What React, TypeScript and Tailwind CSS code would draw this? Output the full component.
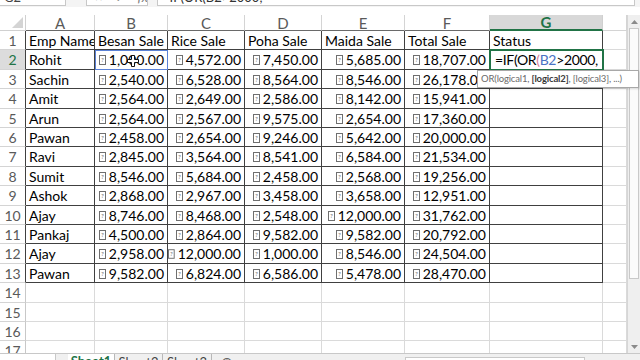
import React from 'react';

const data: string[][] = [
  ['Emp Name', 'Besan Sale', 'Rice Sale', 'Poha Sale', 'Maida Sale', 'Total Sale', 'Status'],
  ['Rohit', '1,000.00', '4,572.00', '7,450.00', '5,685.00', '18,707.00', ''],
  ['Sachin', '2,540.00', '6,528.00', '8,564.00', '8,546.00', '26,178.00', ''],
  ['Amit', '2,564.00', '2,649.00', '2,586.00', '8,142.00', '15,941.00', ''],
  ['Arun', '2,564.00', '2,567.00', '9,575.00', '2,654.00', '17,360.00', ''],
  ['Pawan', '2,458.00', '2,654.00', '9,246.00', '5,642.00', '20,000.00', ''],
  ['Ravi', '2,845.00', '3,564.00', '8,541.00', '6,584.00', '21,534.00', ''],
  ['Sumit', '8,546.00', '5,684.00', '2,458.00', '2,568.00', '19,256.00', ''],
  ['Ashok', '2,868.00', '2,967.00', '3,458.00', '3,658.00', '12,951.00', ''],
  ['Ajay', '8,746.00', '8,468.00', '2,548.00', '12,000.00', '31,762.00', ''],
  ['Pankaj', '4,500.00', '2,864.00', '9,582.00', '9,582.00', '20,792.00', ''],
  ['Ajay', '2,958.00', '12,000.00', '1,000.00', '8,546.00', '24,504.00', ''],
  ['Pawan', '9,582.00', '6,824.00', '6,586.00', '5,478.00', '28,470.00', ''],
];

const heights = [19, 20, 19, 20, 19, 19, 20, 19, 20, 19, 19, 20, 19, 20, 19, 19, 20];
const letters = ['A', 'B', 'C', 'D', 'E', 'F', 'G', ''];

function Glyph() {
  return (
    <svg width="7" height="10" viewBox="0 0 7 10" className="inline-block mr-[3px]">
      <rect x="0.5" y="0.5" width="6" height="9" fill="white" stroke="#6f6f6f" strokeWidth="1" />
      <text x="3.5" y="7.4" textAnchor="middle" fontSize="6.5" fill="#6f6f6f" fontFamily="Lato, sans-serif">?</text>
    </svg>
  );
}

function TopBar() {
  return (
    <div className="h-[7px] flex bg-[#f4f4f4] overflow-hidden">
      <div className="w-[66px] h-[6px] bg-white border-r border-b border-[#c8c8c8] overflow-hidden">
        <div className="mt-[-11px] pl-[4px] text-[13px] leading-[16px] text-[#444]">G2</div>
      </div>
      <div className="w-[20px]" />
      <div className="w-[62px] h-[6px] bg-white border-l border-r border-b border-[#c8c8c8] overflow-hidden">
        <div className="mt-[-11px] flex gap-[12px] pl-[8px] text-[13px] leading-[16px] text-[#777]">
          <span>×</span>
          <span>✓</span>
          <span className="italic">fx</span>
        </div>
      </div>
      <div className="w-[9px]" />
      <div className="w-[478px] h-[6px] bg-white border-l border-r border-b border-[#c8c8c8] overflow-hidden">
        <div className="mt-[-11px] pl-[4px] text-[13px] leading-[16px] text-[#333]">=IF(OR(B2&gt;2000,</div>
      </div>
      <div className="flex-1" />
    </div>
  );
}

function Corner() {
  return (
    <div className="h-[16px] bg-white border-r border-b border-[#d0d0d0] flex items-end justify-end pr-[2px] pb-[2px]">
      <svg width="11" height="11" viewBox="0 0 11 11">
        <polygon points="11,0 11,11 0,11" fill="#d4d4d4" />
      </svg>
    </div>
  );
}

function ColHeader({ letter, idx }: { letter: string; idx: number }) {
  if (idx === 6) {
    return (
      <div className="h-[16px] leading-[14px] text-center text-[15px] font-bold bg-[#d8d8d8] text-[#217346] border-r border-[#d0d0d0] border-b-2 border-b-[#217346]">
        {letter}
      </div>
    );
  }
  return (
    <div
      className={
        idx < 7
          ? 'h-[16px] leading-[16px] text-center text-[15px] text-[#5a5a5a] bg-white border-r border-[#d4d4d4] border-b border-b-[#6a6a6a]'
          : 'h-[16px] leading-[16px] text-center text-[15px] text-[#5a5a5a] bg-white border-r border-[#d4d4d4] border-b border-b-[#d4d4d4]'
      }
    >
      {letter}
    </div>
  );
}

function RowHeader({ r }: { r: number }) {
  const h = heights[r - 1] === 19 ? 'h-[19px] leading-[19px]' : 'h-[20px] leading-[20px]';
  const active = r === 2;
  const right = r <= 13 ? 'border-r-[#404040]' : 'border-r-[#c8c8c8]';
  return (
    <div
      className={`${h} text-center text-[14px] border-r border-b border-b-[#d4d4d4] ${right} ${
        active ? 'bg-[#dcdcdc] text-[#217346]' : 'bg-white text-[#5a5a5a]'
      }`}
    >
      {r}
    </div>
  );
}

function Formula() {
  return (
    <span className="tracking-[-0.35px]">
      =IF(OR<span className="text-[#d9829a]">(</span>
      <span className="text-[#4a72c4]">B2</span>&gt;2000,
    </span>
  );
}

function Cell({ r, c }: { r: number; c: number }) {
  const h = heights[r - 1] === 19 ? 'h-[19px] leading-[19px]' : 'h-[20px] leading-[20px]';
  const inTable = r <= 13 && c <= 6;
  const border = inTable ? 'border-r border-b border-[#404040]' : 'border-r border-b border-[#dadada]';
  const value = r <= 13 && c <= 6 ? data[r - 1][c] : '';
  const isNum = r >= 2 && r <= 13 && c >= 1 && c <= 5;
  let extra = '';
  if (r === 2 && c === 6) extra = ' relative z-10 outline-2 outline-[#217346] -outline-offset-1';
  if (r === 2 && c === 1) extra = ' relative z-[5] outline-1 outline-[#5b82d6] -outline-offset-1 bg-[#fbfcff]';

  if (isNum) {
    return (
      <div className={`${h} ${border} bg-white overflow-hidden whitespace-nowrap flex justify-end items-baseline pr-[3px] text-[14px] text-[#111]${extra}`}>
        <Glyph />
        <span>{value}</span>
      </div>
    );
  }
  return (
    <div className={`${h} ${border} bg-white overflow-hidden whitespace-nowrap pl-[3px] text-[14px] text-[#111]${extra}`}>
      {r === 2 && c === 6 ? (
        <div className="pl-[2px]">
          <Formula />
        </div>
      ) : (
        value
      )}
    </div>
  );
}

function VScroll() {
  return (
    <div className="w-[13px] flex flex-col bg-[#efefef] border-l border-[#d6d6d6]">
      <div className="h-[13px] flex items-center justify-center">
        <svg width="7" height="4" viewBox="0 0 7 4">
          <polygon points="3.5,0 7,4 0,4" fill="#8a8a8a" />
        </svg>
      </div>
      <div className="h-[251px] bg-[#fbfbfb] border border-[#c9c9c9] mx-[1px]" />
      <div className="flex-1" />
      <div className="h-[13px] flex items-center justify-center">
        <svg width="7" height="4" viewBox="0 0 7 4">
          <polygon points="0,0 7,0 3.5,4" fill="#8a8a8a" />
        </svg>
      </div>
    </div>
  );
}

function TabBar() {
  return (
    <div className="h-[7px] flex bg-[#f0f0f0] border-t border-[#c8c8c8] overflow-hidden">
      <div className="w-[56px] h-[6px] bg-white border-r border-[#c8c8c8]" />
      <div className="w-[12px]" />
      <div className="w-[46px] bg-white text-center text-[13px] leading-[16px] font-bold text-[#217346] mt-[-1px]">Sheet1</div>
      <div className="w-[48px] text-center text-[13px] leading-[16px] text-[#444] border-l border-[#b8b8b8]">Sheet2</div>
      <div className="w-px bg-[#b8b8b8]" />
      <div className="w-[48px] text-center text-[13px] leading-[16px] text-[#444]">Sheet3</div>
      <div className="w-px bg-[#b8b8b8]" />
      <div className="w-[30px] text-center text-[14px] leading-[16px] text-[#666]">⊕</div>
      <div className="flex-1" />
      <div className="w-[180px] h-[10px] mt-[3px] bg-white border border-[#c9c9c9]" />
      <div className="w-[55px]" />
    </div>
  );
}

export default function App() {
  const rowNums = Array.from({ length: 17 }, (_, i) => i + 1);
  return (
    <div className="relative w-[640px] h-[360px] overflow-hidden bg-white flex flex-col font-['Lato','Noto_Sans',sans-serif]">
      <TopBar />
      <div className="h-[8px] bg-white" />
      <div className="flex h-[338px] overflow-hidden">
        <div className="grid grid-cols-[26px_69px_73px_77px_77px_83px_85px_113px_24px] content-start overflow-hidden">
          <Corner />
          {letters.map((l, i) => (
            <ColHeader key={i} letter={l} idx={i} />
          ))}
          {rowNums.map((r) => (
            <React.Fragment key={r}>
              <RowHeader r={r} />
              {letters.map((_, c) => (
                <Cell key={c} r={r} c={c} />
              ))}
            </React.Fragment>
          ))}
        </div>
        <VScroll />
      </div>
      <TabBar />

      <div className="absolute left-[477px] top-[70px] h-[18px] w-[162px] bg-white border border-[#a8a8a8] shadow-[1px_1px_2px_rgba(0,0,0,0.15)] pl-[3px] text-[9.5px] leading-[16px] tracking-[-0.15px] text-[#6a6a6a] whitespace-nowrap overflow-hidden z-20">
        OR(logical1, <span className="font-bold text-[#3a3a3a]">[logical2]</span>, [logical3], ...)
      </div>

      <svg className="absolute left-[127px] top-[55px] z-20" width="12" height="12" viewBox="0 0 12 12">
        <path d="M4.5 0.5 H7.5 V4.5 H11.5 V7.5 H7.5 V11.5 H4.5 V7.5 H0.5 V4.5 H4.5 Z" fill="white" stroke="#111" strokeWidth="1" />
      </svg>
    </div>
  );
}
